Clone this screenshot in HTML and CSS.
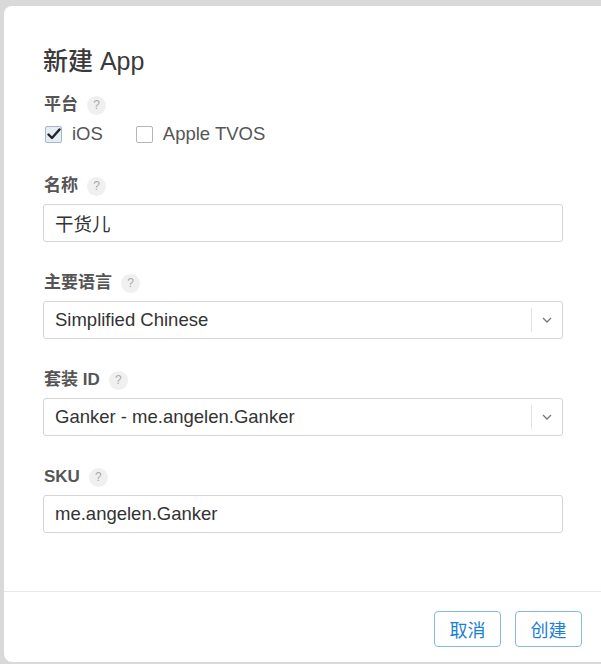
FILE: index.html
```html
<!DOCTYPE html>
<html lang="zh-CN">
<head>
    <meta charset="UTF-8">
    <title>新建 App</title>
    <link rel="stylesheet" href="styles.css">
</head>
<body>

    <div class="modal">
        <div class="modal-body">
            <h1 class="title">新建 App</h1>

            <!-- Platform -->
            <div class="field field-platform">
                <div class="label">平台 <span class="help">?</span></div>
                <div class="checks">
                    <label class="check">
                        <span class="box checked">
                            <svg width="14" height="12" viewBox="0 0 14 12"><path d="M1.5 6.5 L5 10 L12.5 1.5" fill="none" stroke="#222" stroke-width="2.4" stroke-linecap="round" stroke-linejoin="round"/></svg>
                        </span>
                        iOS
                    </label>
                    <label class="check">
                        <span class="box"></span>
                        Apple TVOS
                    </label>
                </div>
            </div>

            <div class="field">
                <div class="label">名称 <span class="help">?</span></div>
                <div class="input">干货儿</div>
            </div>

            <div class="field">
                <div class="label">主要语言 <span class="help">?</span></div>
                <div class="input select">
                    <span class="value">Simplified Chinese</span>
                    <span class="arrow">
                        <svg width="10" height="6" viewBox="0 0 10 6"><path d="M1 1 L5 5 L9 1" fill="none" stroke="#777" stroke-width="1.3"/></svg>
                    </span>
                </div>
            </div>

            <div class="field">
                <div class="label">套装 ID <span class="help">?</span></div>
                <div class="input select">
                    <span class="value">Ganker - me.angelen.Ganker</span>
                    <span class="arrow">
                        <svg width="10" height="6" viewBox="0 0 10 6"><path d="M1 1 L5 5 L9 1" fill="none" stroke="#777" stroke-width="1.3"/></svg>
                    </span>
                </div>
            </div>

            <div class="field">
                <div class="label">SKU <span class="help">?</span></div>
                <div class="input">me.angelen.Ganker</div>
            </div>
        </div>

        <div class="modal-footer">
            <button class="btn">取消</button>
            <button class="btn">创建</button>
        </div>
    </div>

</body>
</html>
```

FILE: styles.css
```css
* {
    margin: 0;
    padding: 0;
    box-sizing: border-box;
}

body {
    font-family: "Liberation Sans", "Noto Sans CJK SC", sans-serif;
    background-color: #d9d9d9;
    color: #333;
    overflow: hidden;
    height: 664px;
    padding: 6px 0 0 4px;
}

/* Dialog */
.modal {
    width: 610px;
    height: 656px;
    background: #fff;
    border-radius: 8px 0 0 8px;
    display: flex;
    flex-direction: column;
}

.modal-body {
    padding: 39px 51px 0 39px;
    flex: 1;
}

.title {
    font-size: 25px;
    line-height: 32px;
    font-weight: 500;
    color: #3a3a3a;
    margin-bottom: 18px;
}

.field {
    margin-bottom: 31px;
}

.label {
    font-size: 17px;
    line-height: 20px;
    font-weight: 600;
    color: #555;
    display: flex;
    align-items: center;
    gap: 9px;
    margin-bottom: 8px;
    padding-left: 1px;
}

.help {
    width: 19px;
    height: 19px;
    border-radius: 50%;
    background: #f0f0f0;
    color: #aaa;
    font-size: 12px;
    font-weight: normal;
    display: inline-flex;
    align-items: center;
    justify-content: center;
}

/* Platform checkboxes */
.field-platform {
    margin-bottom: 30px;
}

.field-platform .label {
    margin-bottom: 7px;
}

.checks {
    display: flex;
    gap: 33px;
    height: 24px;
    align-items: center;
    padding-left: 2px;
}

.check {
    display: flex;
    align-items: center;
    gap: 10px;
    font-size: 18.5px;
    color: #555;
}

.box {
    width: 17px;
    height: 17px;
    border: 1px solid #b5b5b5;
    border-radius: 2px;
    background: #fff;
    display: flex;
    align-items: center;
    justify-content: center;
}

.box.checked {
    background: #e3ecf7;
    border-color: #a9b8c9;
}

/* Inputs */
.input {
    height: 38px;
    border: 1px solid #d4d4d4;
    border-radius: 3px;
    font-size: 18.5px;
    color: #333;
    padding: 0 11px;
    display: flex;
    align-items: center;
}

.select {
    padding-right: 0;
}

.select .value {
    flex: 1;
}

.arrow {
    width: 31px;
    height: 24px;
    border-left: 1px solid #e2e2e2;
    display: flex;
    align-items: center;
    justify-content: center;
}

/* Footer */
.modal-footer {
    border-top: 1px solid #e8e8e8;
    padding: 19px 0 15px 430px;
    display: flex;
    gap: 14px;
}

.btn {
    font-family: "Liberation Sans", "Noto Sans CJK SC", sans-serif;
    width: 67px;
    height: 36px;
    font-size: 18px;
    color: #1b7fd8;
    background: #fff;
    border: 1px solid #86b9e8;
    border-radius: 4px;
    cursor: pointer;
}
```
